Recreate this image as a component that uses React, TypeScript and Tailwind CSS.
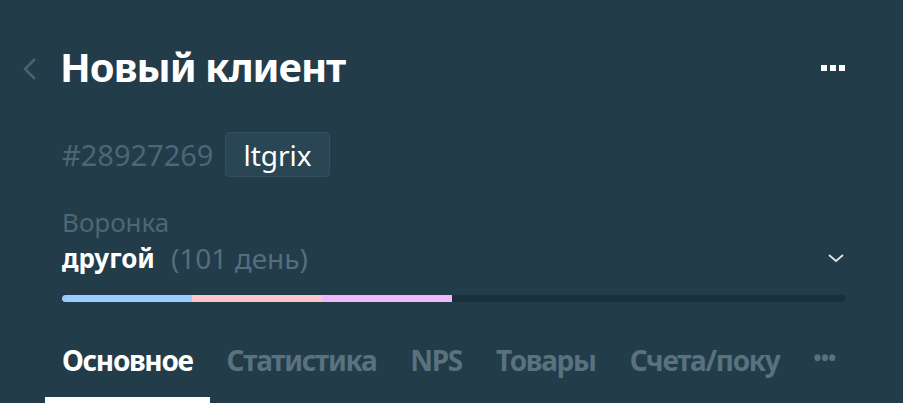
import React from 'react';

const TABS = ['Основное', 'Статистика', 'NPS', 'Товары', 'Счета/поку'];

const STAGES = [
  { color: 'bg-[#99ccff]' },
  { color: 'bg-[#ffc8c8]' },
  { color: 'bg-[#f0b8f8]' },
];

const App: React.FC = () => {
  return (
    <div
      className="w-[903px] h-[403px] overflow-hidden bg-[#223c4a] text-white"
      style={{ fontFamily: '"Noto Sans", "Liberation Sans", sans-serif' }}
    >
      {/* header */}
      <div className="flex items-center h-[60px] mt-[37px] pl-[20px] pr-[58px]">
        <svg width="20" height="26" viewBox="0 0 20 26" className="mr-[20px] mt-[4px]">
          <path d="M15 3 L5 13 L15 23" fill="none" stroke="#4b6270" strokeWidth="2.5" />
        </svg>
        <h1 className="text-[40px] font-bold tracking-[-1px] leading-none">Новый клиент</h1>
        <div className="ml-auto flex gap-[3px] mt-[2px]">
          <span className="w-[6px] h-[6px] bg-white" />
          <span className="w-[6px] h-[6px] bg-white" />
          <span className="w-[6px] h-[6px] bg-white" />
        </div>
      </div>

      <div className="pl-[62px] pr-[58px]">
        {/* id + tag */}
        <div className="flex items-center gap-[12px] mt-[35px] h-[45px]">
          <span className="text-[29px] text-[#4f6674]">#28927269</span>
          <span className="h-[45px] px-[17px] flex items-center rounded-[4px] bg-[#2a4553] border border-[#33505e] text-[28px]">
            ltgrix
          </span>
        </div>

        {/* pipeline */}
        <div className="mt-[30px] text-[26px] leading-[30px] text-[#4f6674]">Воронка</div>
        <div className="flex items-center h-[38px] mt-[2px]">
          <span className="text-[26px] font-bold">другой</span>
          <span className="ml-[16px] text-[28px] text-[#566d7a]">(101 день)</span>
          <svg width="18" height="12" viewBox="0 0 18 12" className="ml-auto">
            <path d="M2 3 L9 9 L16 3" fill="none" stroke="#dfe6ea" strokeWidth="1.8" />
          </svg>
        </div>
        <div className="mt-[18px] h-[7px] rounded-full bg-[#19303c] overflow-hidden flex">
          {STAGES.map((s, i) => (
            <div key={i} className={`w-[130px] h-full ${s.color}`} />
          ))}
        </div>
      </div>

      {/* tabs */}
      <div className="flex items-end mt-[35px] pl-[45px] h-[66px]">
        {TABS.map((t, i) => (
          <div
            key={t}
            className={`px-[17px] h-full flex items-start pt-[2px] text-[28px] font-bold tracking-[-1.3px] border-b-[6px] ${
              i === 0 ? 'text-white border-white' : 'text-[#5a717e] border-transparent'
            }`}
          >
            {t}
          </div>
        ))}
        <div className="px-[17px] h-full flex items-start pt-[4px] text-[22px] font-bold text-[#5a717e] tracking-[-1px]">•••</div>
      </div>
    </div>
  );
};

export default App;
